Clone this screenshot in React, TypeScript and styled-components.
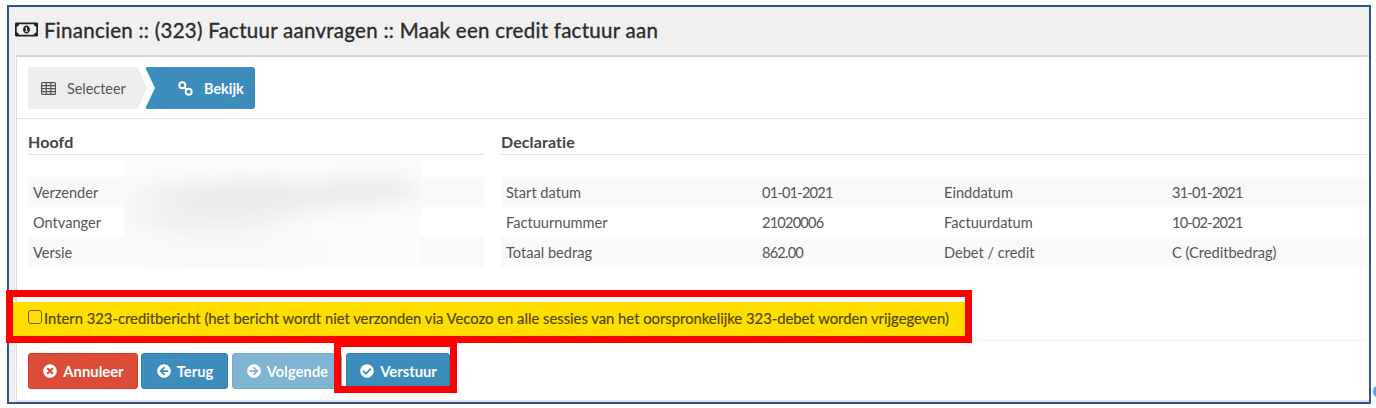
import React from 'react';
import styled, { createGlobalStyle } from 'styled-components';
import {
  FaArrowCircleLeft,
  FaArrowCircleRight,
  FaCheckCircle,
  FaRegMoneyBillAlt,
  FaTimesCircle,
} from 'react-icons/fa';

const GlobalStyle = createGlobalStyle`
  html, body {
    margin: 0;
    background: #fff;
    font-family: Lato, "Noto Sans", sans-serif;
    color: #444;
  }
  * {
    box-sizing: border-box;
  }
`;

const Page = styled.div`
  position: relative;
  width: 1376px;
  height: 408px;
  padding: 5px 5px 4px 7px;
  overflow: hidden;
`;

const Frame = styled.div`
  display: flex;
  flex-direction: column;
  height: 399px;
  border: 2px solid #2f5597;
  background: #f0f0f0;
`;

const Header = styled.div`
  display: flex;
  align-items: center;
  gap: 6px;
  height: 48px;
  padding: 0 0 3px 6px;
  flex-shrink: 0;
`;

const Title = styled.h1`
  margin: 0;
  font-size: 20.5px;
  font-weight: 400;
  letter-spacing: 0.27px;
  color: #2b2b2b;
  -webkit-text-stroke: 0.35px #2b2b2b;
`;

const Content = styled.div`
  flex: 1;
  margin-left: 7px;
  border-top: 2px solid #d2d6de;
  border-left: 1px solid #dcdcdc;
  border-bottom: 2px solid #e2e2e2;
  background: #fff;
`;

const StepBar = styled.div`
  display: flex;
  padding: 10px 11px 9px;
  border-bottom: 1px solid #e2e2e2;
`;

const Step = styled.div<{ $active?: boolean }>`
  display: flex;
  align-items: center;
  height: 42px;
  border-radius: 3px;
  font-size: 14.4px;
  font-weight: ${({ $active }) => ($active ? 700 : 400)};
  color: ${({ $active }) => ($active ? '#fff' : '#555')};
  background: ${({ $active }) => ($active ? '#3c8dbc' : '#eee')};
  width: ${({ $active }) => ($active ? '110px' : '119px')};
  margin-left: ${({ $active }) => ($active ? '-2px' : '0')};
  padding-left: ${({ $active }) => ($active ? '33px' : '13px')};
  gap: 11px;
  clip-path: ${({ $active }) =>
    $active
      ? 'polygon(0 0, 100% 0, 100% 100%, 0 100%, 10px 50%)'
      : 'polygon(0 0, 110px 0, 100% 50%, 110px 100%, 0 100%)'};
`;

const Columns = styled.div`
  display: grid;
  grid-template-columns: 456px 1fr;
  column-gap: 17px;
  height: 183px;
  padding: 12px 0 0 11px;
`;

const SectionTitle = styled.h2`
  display: flex;
  align-items: center;
  height: 24px;
  margin: 0 0 22px;
  border-bottom: 1px solid #e2e2e2;
  padding-bottom: 3px;
  font-size: 16px;
  font-weight: 700;
  letter-spacing: 0.1px;
  color: #444;
`;

const InfoTable = styled.div<{ $columns: string }>`
  display: grid;
  grid-template-columns: ${({ $columns }) => $columns};
  font-size: 14.6px;
  color: #555;
`;

const Cell = styled.div<{ $striped: boolean; $numeric?: boolean }>`
  display: flex;
  align-items: center;
  height: 30px;
  padding: 0 0 0 5px;
  white-space: nowrap;
  letter-spacing: ${({ $numeric }) => ($numeric ? '-0.8px' : '0')};
  background: ${({ $striped }) => ($striped ? '#f9f9f9' : '#fff')};
`;

const ConsentRow = styled.label`
  position: relative;
  display: flex;
  align-items: center;
  gap: 2px;
  width: 952px;
  height: 34px;
  margin: 0 0 0 -4px;
  padding: 0 0 2px 15px;
  background: #ffde00;
  font-size: 14.8px;
  color: #524700;
  -webkit-text-stroke: 0.2px #524700;
  white-space: nowrap;
`;

const Check = styled.input`
  appearance: none;
  width: 14px;
  height: 14px;
  margin: 0 0 2px;
  border: 1.5px solid #6f6510;
  border-radius: 3px;
  background: transparent;
`;

const Actions = styled.div`
  display: flex;
  margin-top: 4px;
  padding: 12px 0 0 11px;
  border-top: 1px solid #f4f4f4;
`;

const ActionButton = styled.button<{ $kind: 'danger' | 'primary'; $width: number; $gap: number; $off?: boolean }>`
  display: flex;
  align-items: center;
  justify-content: center;
  gap: 6px;
  width: ${({ $width }) => $width}px;
  height: 36px;
  margin: 0 ${({ $gap }) => $gap}px 0 0;
  padding: 0 0 0 1px;
  border: 1px solid ${({ $kind }) => ($kind === 'danger' ? '#d73925' : '#367fa9')};
  border-radius: 3px;
  background: ${({ $kind }) => ($kind === 'danger' ? '#dd4b39' : '#3c8dbc')};
  color: #fff;
  font-family: inherit;
  font-size: 14.8px;
  font-weight: 700;
  opacity: ${({ $off }) => ($off ? 0.65 : 1)};
`;

// annotations drawn on top of the screenshot
const Marker = styled.div<{ $x: number; $y: number; $w: number; $h: number; $top: number }>`
  position: absolute;
  left: ${({ $x }) => $x}px;
  top: ${({ $y }) => $y}px;
  width: ${({ $w }) => $w}px;
  height: ${({ $h }) => $h}px;
  border: 7px solid #ff0000;
  border-top-width: ${({ $top }) => $top}px;
  pointer-events: none;
`;

const Redaction = styled.div`
  position: absolute;
  left: 124px;
  top: 160px;
  width: 297px;
  height: 108px;
  overflow: hidden;
  background: #fbfbfb;
`;

const Smudge = styled.div`
  position: absolute;
  inset: 0;
  filter: blur(9px);
  background:
    radial-gradient(ellipse 150px 20px at 130px 36px, #e9e9e9 50%, transparent 100%),
    radial-gradient(ellipse 70px 17px at 245px 30px, #eaeaea 50%, transparent 100%),
    radial-gradient(ellipse 105px 17px at 85px 60px, #eeeeee 50%, transparent 100%),
    radial-gradient(ellipse 120px 12px at 100px 92px, #f8f5f5 50%, transparent 100%);
`;

const EdgeDot = styled.div`
  position: absolute;
  left: 1373px;
  top: 386px;
  width: 8px;
  height: 11px;
  border-radius: 50%;
  background: #4da3f0;
`;

const GridIcon = () => (
  <svg width="15" height="13" viewBox="0 0 15 13" fill="none" stroke="currentColor" strokeWidth="1.2">
    <rect x="0.6" y="0.6" width="13.8" height="11.8" rx="1" />
    <path d="M0.6 3.6H14.4M0.6 6.6H14.4M0.6 9.6H14.4M5.2 0.6V12.4M9.8 0.6V12.4" />
  </svg>
);

const ChainIcon = () => (
  <svg width="15" height="15" viewBox="0 0 15 15" fill="none" stroke="currentColor" strokeWidth="2">
    <circle cx="4.3" cy="4.3" r="3" />
    <circle cx="10.7" cy="10.7" r="3" />
    <path d="M6.4 6.4L8.6 8.6" />
  </svg>
);

const leftRows = ['Verzender', 'Ontvanger', 'Versie'];

const rightRows = [
  ['Start datum', '01-01-2021', 'Einddatum', '31-01-2021'],
  ['Factuurnummer', '21020006', 'Factuurdatum', '10-02-2021'],
  ['Totaal bedrag', '862.00', 'Debet / credit', 'C (Creditbedrag)'],
];

export default function App() {
  return (
    <Page>
      <GlobalStyle />
      <Frame>
        <Header>
          <FaRegMoneyBillAlt size={23} color="#222" />
          <Title>Financien :: (323) Factuur aanvragen :: Maak een credit factuur aan</Title>
        </Header>
        <Content>
          <StepBar>
            <Step>
              <GridIcon />
              Selecteer
            </Step>
            <Step $active>
              <ChainIcon />
              Bekijk
            </Step>
          </StepBar>
          <Columns>
            <section>
              <SectionTitle>Hoofd</SectionTitle>
              <InfoTable $columns="96px 1fr">
                {leftRows.map((label, i) => (
                  <React.Fragment key={label}>
                    <Cell $striped={i % 2 === 0}>{label}</Cell>
                    <Cell $striped={i % 2 === 0} />
                  </React.Fragment>
                ))}
              </InfoTable>
            </section>
            <section>
              <SectionTitle>Declaratie</SectionTitle>
              <InfoTable $columns="256px 182px 228px 1fr">
                {rightRows.map((row, i) =>
                  row.map((text) => (
                    <Cell key={text} $striped={i % 2 === 0} $numeric={/^[\d.-]+$/.test(text)}>
                      {text}
                    </Cell>
                  )),
                )}
              </InfoTable>
            </section>
          </Columns>
          <ConsentRow>
            <Check type="checkbox" />
            Intern 323-creditbericht (het bericht wordt niet verzonden via Vecozo en alle sessies van het
            oorspronkelijke 323-debet worden vrijgegeven)
          </ConsentRow>
          <Actions>
            <ActionButton $kind="danger" $width={110} $gap={3}>
              <FaTimesCircle size={14} />
              Annuleer
            </ActionButton>
            <ActionButton $kind="primary" $width={87} $gap={4}>
              <FaArrowCircleLeft size={14} />
              Terug
            </ActionButton>
            <ActionButton $kind="primary" $width={110} $gap={4} $off>
              <FaArrowCircleRight size={14} />
              Volgende
            </ActionButton>
            <ActionButton $kind="primary" $width={104} $gap={0}>
              <FaCheckCircle size={14} />
              Verstuur
            </ActionButton>
          </Actions>
        </Content>
      </Frame>
      <Redaction>
        <Smudge />
      </Redaction>
      <Marker $x={6} $y={290} $w={966} $h={53} $top={7} />
      <Marker $x={334} $y={343} $w={123} $h={50} $top={4} />
      <EdgeDot />
    </Page>
  );
}
